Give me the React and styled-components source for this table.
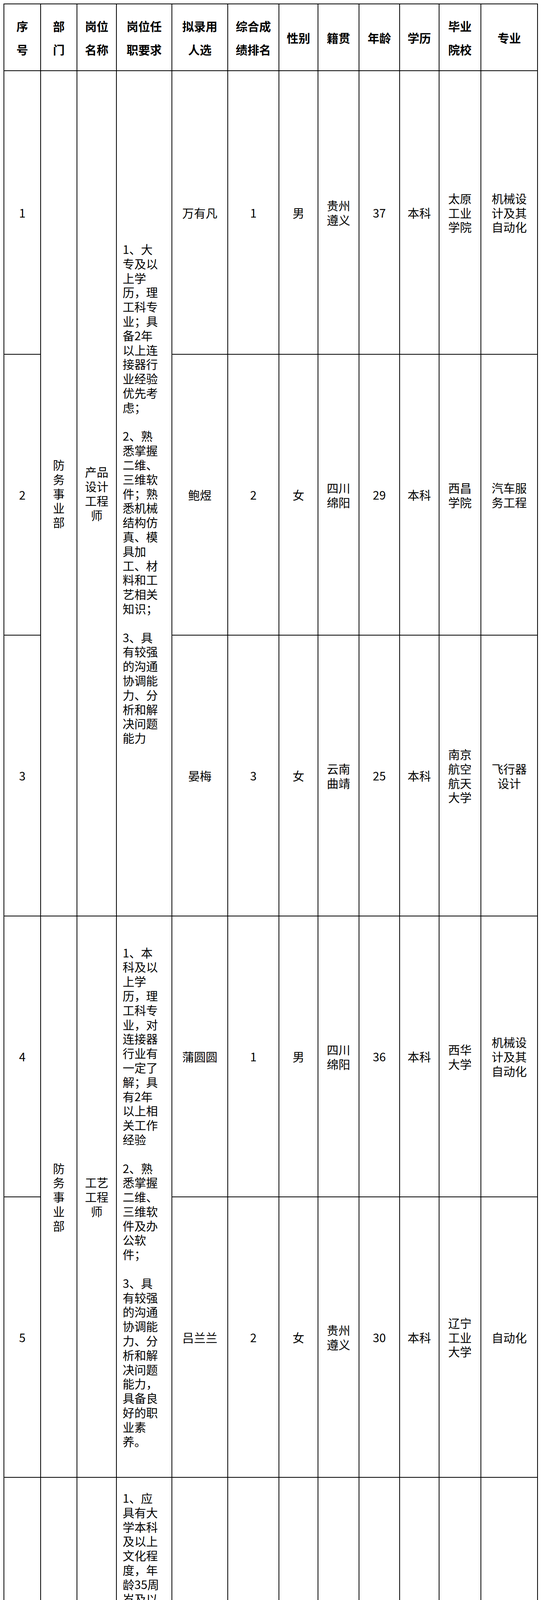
import React from 'react';
import styled, { createGlobalStyle } from 'styled-components';

const Global = createGlobalStyle`
  html, body { margin: 0; padding: 0; background: #fff; }
  body {
    font-family: "Noto Sans CJK SC", "Noto Sans", sans-serif;
    color: #000;
  }
`;

const Page = styled.div`
  width: 1390px;
  min-height: 5113px;
  padding: 9px 0 0 9px;
  box-sizing: border-box;
`;

const Table = styled.table`
  border-collapse: collapse;
  table-layout: fixed;
  width: 1368px;
`;

const Row = styled.tr`
  height: ${(p) => p.$h}px;
`;

const HeadCell = styled.th`
  border: 2px solid #000;
  padding: 0;
  font-size: 30px;
  font-weight: 700;
  line-height: 60px;
  text-align: center;
  vertical-align: middle;
  white-space: nowrap;
`;

const Cell = styled.td`
  border: 2px solid #000;
  padding: 0;
  font-size: 30px;
  font-weight: 400;
  line-height: 36.8px;
  text-align: center;
  vertical-align: middle;
  white-space: nowrap;
`;

const ReqCell = styled(Cell)`
  text-align: left;
  padding-left: 15px;
`;

const Lines = ({ items }) => (
  <>
    {items.map((l, i) => (
      <React.Fragment key={i}>
        {i > 0 && <br />}
        {l}
      </React.Fragment>
    ))}
  </>
);

const colWidths = [94, 93, 101, 142, 143, 131, 100, 105, 104, 100.5, 107.5, 145];

const headers = [
  ['序', '号'], ['部', '门'], ['岗位', '名称'], ['岗位任', '职要求'], ['拟录用', '人选'], ['综合成', '绩排名'],
  ['性别'], ['籍贯'], ['年龄'], ['学历'], ['毕业', '院校'], ['专业'],
];

const req1 = [
  '1、大', '专及以', '上学', '历，理', '工科专', '业；具', '备2年', '以上连', '接器行', '业经验', '优先考', '虑；',
  '',
  '2、熟', '悉掌握', '二维、', '三维软', '件；熟', '悉机械', '结构仿', '真、模', '具加', '工、材', '料和工', '艺相关', '知识；',
  '',
  '3、具', '有较强', '的沟通', '协调能', '力、分', '析和解', '决问题', '能力',
];

const req2 = [
  '1、本', '科及以', '上学', '历，理', '工科专', '业，对', '连接器', '行业有', '一定了', '解；具', '有2年', '以上相', '关工作', '经验',
  '',
  '2、熟', '悉掌握', '二维、', '三维软', '件及办', '公软', '件；',
  '',
  '3、具', '有较强', '的沟通', '协调能', '力、分', '析和解', '决问题', '能力，', '具备良', '好的职', '业素', '养。',
];

const req3 = [
  '1、应', '具有大', '学本科', '及以上', '文化程', '度，年', '龄35周', '岁及以', '下，有', '党务工', '作经验', '者同等', '条件下', '优先考', '虑；',
  '2、具', '有较强', '的学习', '能力、', '协调和', '沟通能', '力；具', '有较强', '的文字', '写作能', '力；熟', '练各种', '办公软', '件；',
  '3、具', '有2年', '以上相', '关工作', '经验.',
];

const people = [
  { no: '1', name: '万有凡', rank: '1', sex: '男', home: ['贵州', '遵义'], age: '37', edu: '本科', school: ['太原', '工业', '学院'], major: ['机械设', '计及其', '自动化'], h: 726 },
  { no: '2', name: '鲍煜', rank: '2', sex: '女', home: ['四川', '绵阳'], age: '29', edu: '本科', school: ['西昌', '学院'], major: ['汽车服', '务工程'], h: 719 },
  { no: '3', name: '晏梅', rank: '3', sex: '女', home: ['云南', '曲靖'], age: '25', edu: '本科', school: ['南京', '航空', '航天', '大学'], major: ['飞行器', '设计'], h: 719 },
  { no: '4', name: '蒲圆圆', rank: '1', sex: '男', home: ['四川', '绵阳'], age: '36', edu: '本科', school: ['西华', '大学'], major: ['机械设', '计及其', '自动化'], h: 719 },
  { no: '5', name: '吕兰兰', rank: '2', sex: '女', home: ['贵州', '遵义'], age: '30', edu: '本科', school: ['辽宁', '工业', '大学'], major: ['自动化'], h: 718 },
  { no: '6', name: '蔡丹', rank: '1', sex: '女', home: ['四川', '绵阳'], age: '33', edu: '本科', school: ['西南', '科技', '大学'], major: ['计算机', '科学与', '技术'], h: 1319 },
];

const groups = {
  0: { span: 3, dept: ['防', '务', '事', '业', '部'], post: ['产品', '设计', '工程', '师'], req: req1 },
  3: { span: 2, dept: ['防', '务', '事', '业', '部'], post: ['工艺', '工程', '师'], req: req2 },
  5: { span: 1, dept: ['董', '事', '会', '办', '公', '室'], post: ['党建', '事务', '管理'], req: req3 },
};

export default function App() {
  return (
    <>
      <Global />
      <Page>
        <Table>
          <colgroup>
            {colWidths.map((w, i) => (
              <col key={i} style={{ width: `${w}px` }} />
            ))}
          </colgroup>
          <thead>
            <Row $h={171}>
              {headers.map((h, i) => (
                <HeadCell key={i}>
                  <Lines items={h} />
                </HeadCell>
              ))}
            </Row>
          </thead>
          <tbody>
            {people.map((p, i) => {
              const g = groups[i];
              return (
                <Row key={i} $h={p.h}>
                  <Cell>{p.no}</Cell>
                  {g && (
                    <>
                      <Cell rowSpan={g.span}>
                        <Lines items={g.dept} />
                      </Cell>
                      <Cell rowSpan={g.span}>
                        <Lines items={g.post} />
                      </Cell>
                      <ReqCell rowSpan={g.span}>
                        <Lines items={g.req} />
                      </ReqCell>
                    </>
                  )}
                  <Cell>{p.name}</Cell>
                  <Cell>{p.rank}</Cell>
                  <Cell>{p.sex}</Cell>
                  <Cell>
                    <Lines items={p.home} />
                  </Cell>
                  <Cell>{p.age}</Cell>
                  <Cell>{p.edu}</Cell>
                  <Cell>
                    <Lines items={p.school} />
                  </Cell>
                  <Cell>
                    <Lines items={p.major} />
                  </Cell>
                </Row>
              );
            })}
          </tbody>
        </Table>
      </Page>
    </>
  );
}
